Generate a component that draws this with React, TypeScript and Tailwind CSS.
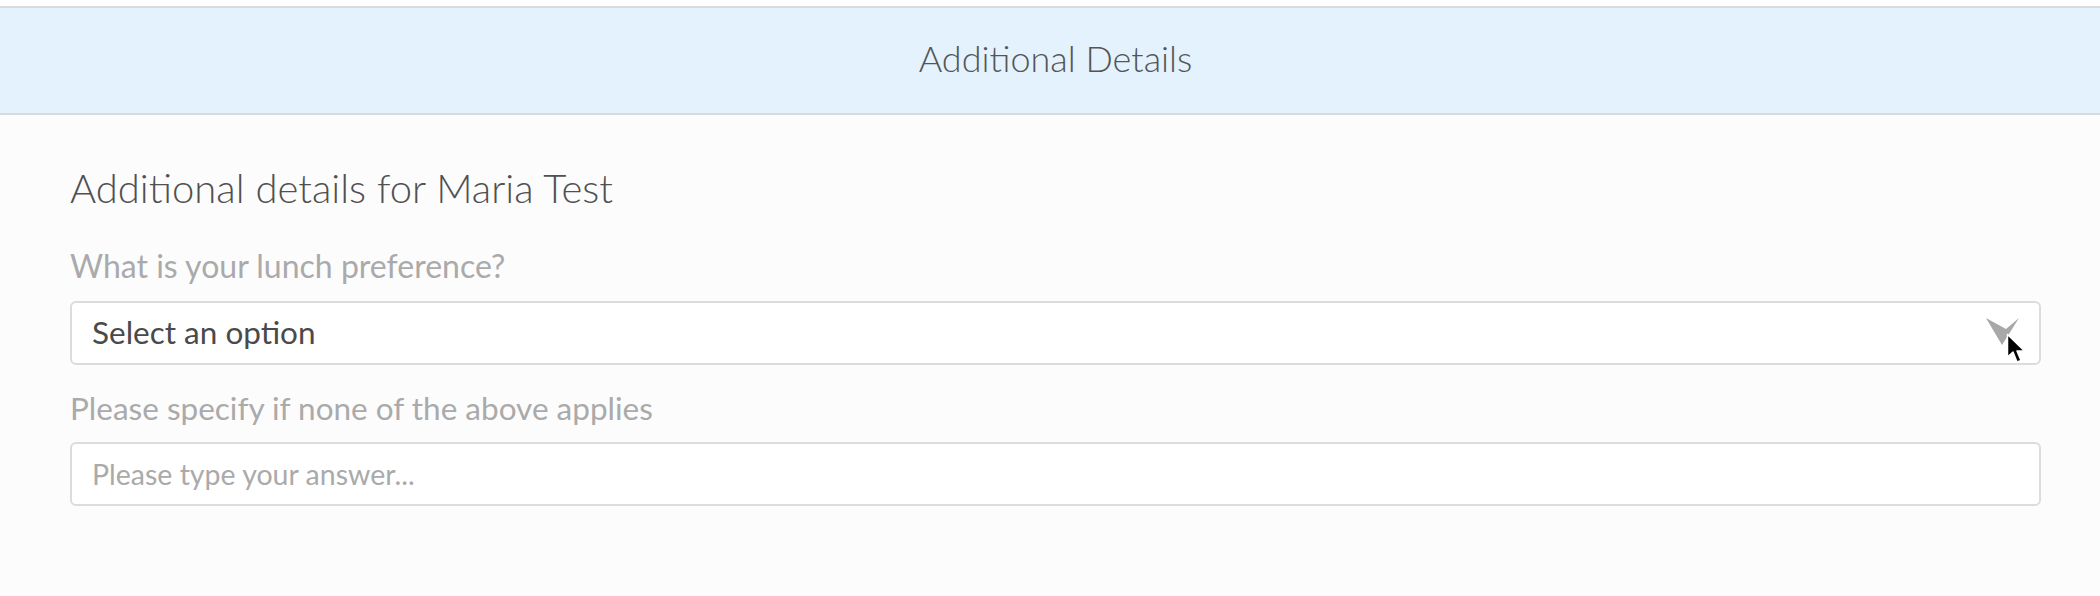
import React from "react";

function Cursor() {
  return (
    <svg width="22" height="32" viewBox="0 0 22 32" className="absolute left-[1934px] top-[30px] pointer-events-none">
      <path d="M1.5,1.5 L1.5,24 L7,19 L11,29 L15,27.5 L11,18 L18.5,18 Z" fill="#000" stroke="#fff" strokeWidth="1.5" strokeLinejoin="round" />
    </svg>
  );
}

export default function App() {
  return (
    <div className="w-full h-[596px] bg-[#fcfcfc] overflow-hidden" style={{ fontFamily: "Lato, 'Open Sans', sans-serif" }}>
      <div className="h-[6px] bg-white" />
      <div className="h-[109px] bg-[#e3f2fd] border-y-2 border-[#dadada] flex items-center justify-center pl-[70px] pr-[59px] pb-[5px]">
        <span className="text-[36px] font-light text-[#555555] leading-none">Additional Details</span>
      </div>
      <div className="pl-[70px] pr-[59px]">
        <h2 className="mt-[49px] text-[40px] font-light text-[#505050] leading-[48px]">Additional details for Maria Test</h2>
        <div className="mt-[35px] text-[32px] text-[#aaaaaa] leading-[38px]">What is your lunch preference?</div>
        <div className="relative mt-[16px] h-[64px] rounded-[6px] border-2 border-[#dcdcdc] bg-white flex items-center pl-[20px]">
          <span className="text-[31.5px] text-[#4a4a4a]">Select an option</span>
          <svg width="33" height="28" viewBox="0 0 33 28" className="absolute right-[20px] top-[15px]">
            <path d="M0,0 L20,11 L33,0 L16,27 Z" fill="#a8a8a8" />
          </svg>
          <Cursor />
        </div>
        <div className="mt-[24px] text-[31.5px] text-[#aaaaaa] leading-[38px]">Please specify if none of the above applies</div>
        <div className="mt-[15px] h-[64px] rounded-[6px] border-2 border-[#dcdcdc] bg-white flex items-center pl-[20px]">
          <span className="text-[28.5px] text-[#aaaaaa]">Please type your answer...</span>
        </div>
      </div>
    </div>
  );
}
